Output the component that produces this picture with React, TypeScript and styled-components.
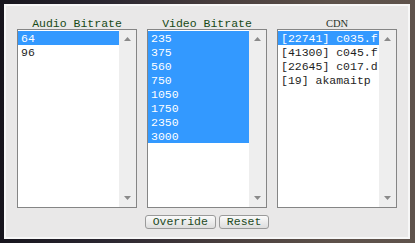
import React from 'react';
import styled, { createGlobalStyle } from 'styled-components';

const GlobalStyle = createGlobalStyle`
  html, body {
    margin: 0;
    padding: 0;
  }
  body {
    width: 415px;
    height: 243px;
    overflow: hidden;
    background: linear-gradient(90deg, #17151d 0%, #2a2630 25%, #4a3f3e 55%, #5d514a 80%, #5f534c 100%);
  }
`;

type Column = {
  title: string;
  serif?: boolean;
  items: string[];
  selected: number[];
};

const columns: Column[] = [
  { title: 'Audio Bitrate', items: ['64', '96'], selected: [0] },
  {
    title: 'Video Bitrate',
    items: ['235', '375', '560', '750', '1050', '1750', '2350', '3000'],
    selected: [0, 1, 2, 3, 4, 5, 6, 7],
  },
  {
    title: 'CDN',
    serif: true,
    items: ['[22741] c035.f', '[41300] c045.f', '[22645] c017.d', '[19] akamaitp'],
    selected: [0],
  },
];

export default function App(): JSX.Element {
  return (
    <>
      <GlobalStyle />
      <Panel>
        <Columns>
          {columns.map((col) => (
            <ColumnBox key={col.title}>
              <Heading $serif={col.serif}>{col.title}</Heading>
              <ListBox>
                <Items>
                  {col.items.map((item, i) => (
                    <Item key={item} $selected={col.selected.includes(i)}>
                      {item}
                    </Item>
                  ))}
                </Items>
                <ScrollTrack>
                  <Arrow viewBox="0 0 7 4">
                    <path d="M0 4 L3.5 0 L7 4 Z" />
                  </Arrow>
                  <Arrow viewBox="0 0 7 4">
                    <path d="M0 0 L3.5 4 L7 0 Z" />
                  </Arrow>
                </ScrollTrack>
              </ListBox>
            </ColumnBox>
          ))}
        </Columns>
        <ButtonRow>
          <Button>Override</Button>
          <Button>Reset</Button>
        </ButtonRow>
      </Panel>
    </>
  );
}

const Panel = styled.div`
  margin: 4px;
  width: 406px;
  height: 235px;
  border: 2px solid #f7f7f7;
  background-color: #e9e8e8;
  padding: 10px 11px 0;
  box-sizing: border-box;
  display: flex;
  flex-direction: column;
`;

const Columns = styled.div`
  display: grid;
  grid-template-columns: repeat(3, 120px);
  column-gap: 10px;
`;

const ColumnBox = styled.div`
  display: flex;
  flex-direction: column;
`;

const Heading = styled.div<{ $serif?: boolean }>`
  height: 13px;
  line-height: 15px;
  text-align: center;
  font-family: ${(p) => (p.$serif ? '"Liberation Serif", serif' : '"Liberation Mono", monospace')};
  font-size: ${(p) => (p.$serif ? '10.5px' : '11.5px')};
  color: ${(p) => (p.$serif ? '#2a332a' : '#174a17')};
`;

const ListBox = styled.div`
  display: flex;
  height: 179px;
  border: 1px solid #858585;
  background-color: #ffffff;
  box-sizing: border-box;
  overflow: hidden;
`;

const Items = styled.div`
  flex: 1;
  padding-top: 1px;
`;

const Item = styled.div<{ $selected: boolean }>`
  height: 14px;
  line-height: 15px;
  padding-left: 3px;
  white-space: nowrap;
  overflow: hidden;
  font-family: "Liberation Mono", monospace;
  font-size: 11.5px;
  color: ${(p) => (p.$selected ? '#ffffff' : '#1e1e1e')};
  background-color: ${(p) => (p.$selected ? '#3399ff' : 'transparent')};
`;

const ScrollTrack = styled.div`
  width: 17px;
  flex-shrink: 0;
  background-color: #eeeeee;
  display: flex;
  flex-direction: column;
  justify-content: space-between;
  align-items: center;
  padding: 7px 0 7px;
  box-sizing: border-box;
`;

const Arrow = styled.svg`
  width: 7px;
  height: 4px;
  fill: #8a8a8a;
`;

const ButtonRow = styled.div`
  display: flex;
  justify-content: center;
  gap: 3px;
  margin-top: 7px;
`;

const Button = styled.button`
  height: 14px;
  padding: 0 7px;
  border: 1px solid #9a9a9a;
  border-radius: 3px;
  background: linear-gradient(#fbfbfb, #dddddd);
  font-family: "Liberation Mono", monospace;
  font-size: 11.5px;
  line-height: 12px;
  color: #1d4a1d;
  box-sizing: border-box;
`;
